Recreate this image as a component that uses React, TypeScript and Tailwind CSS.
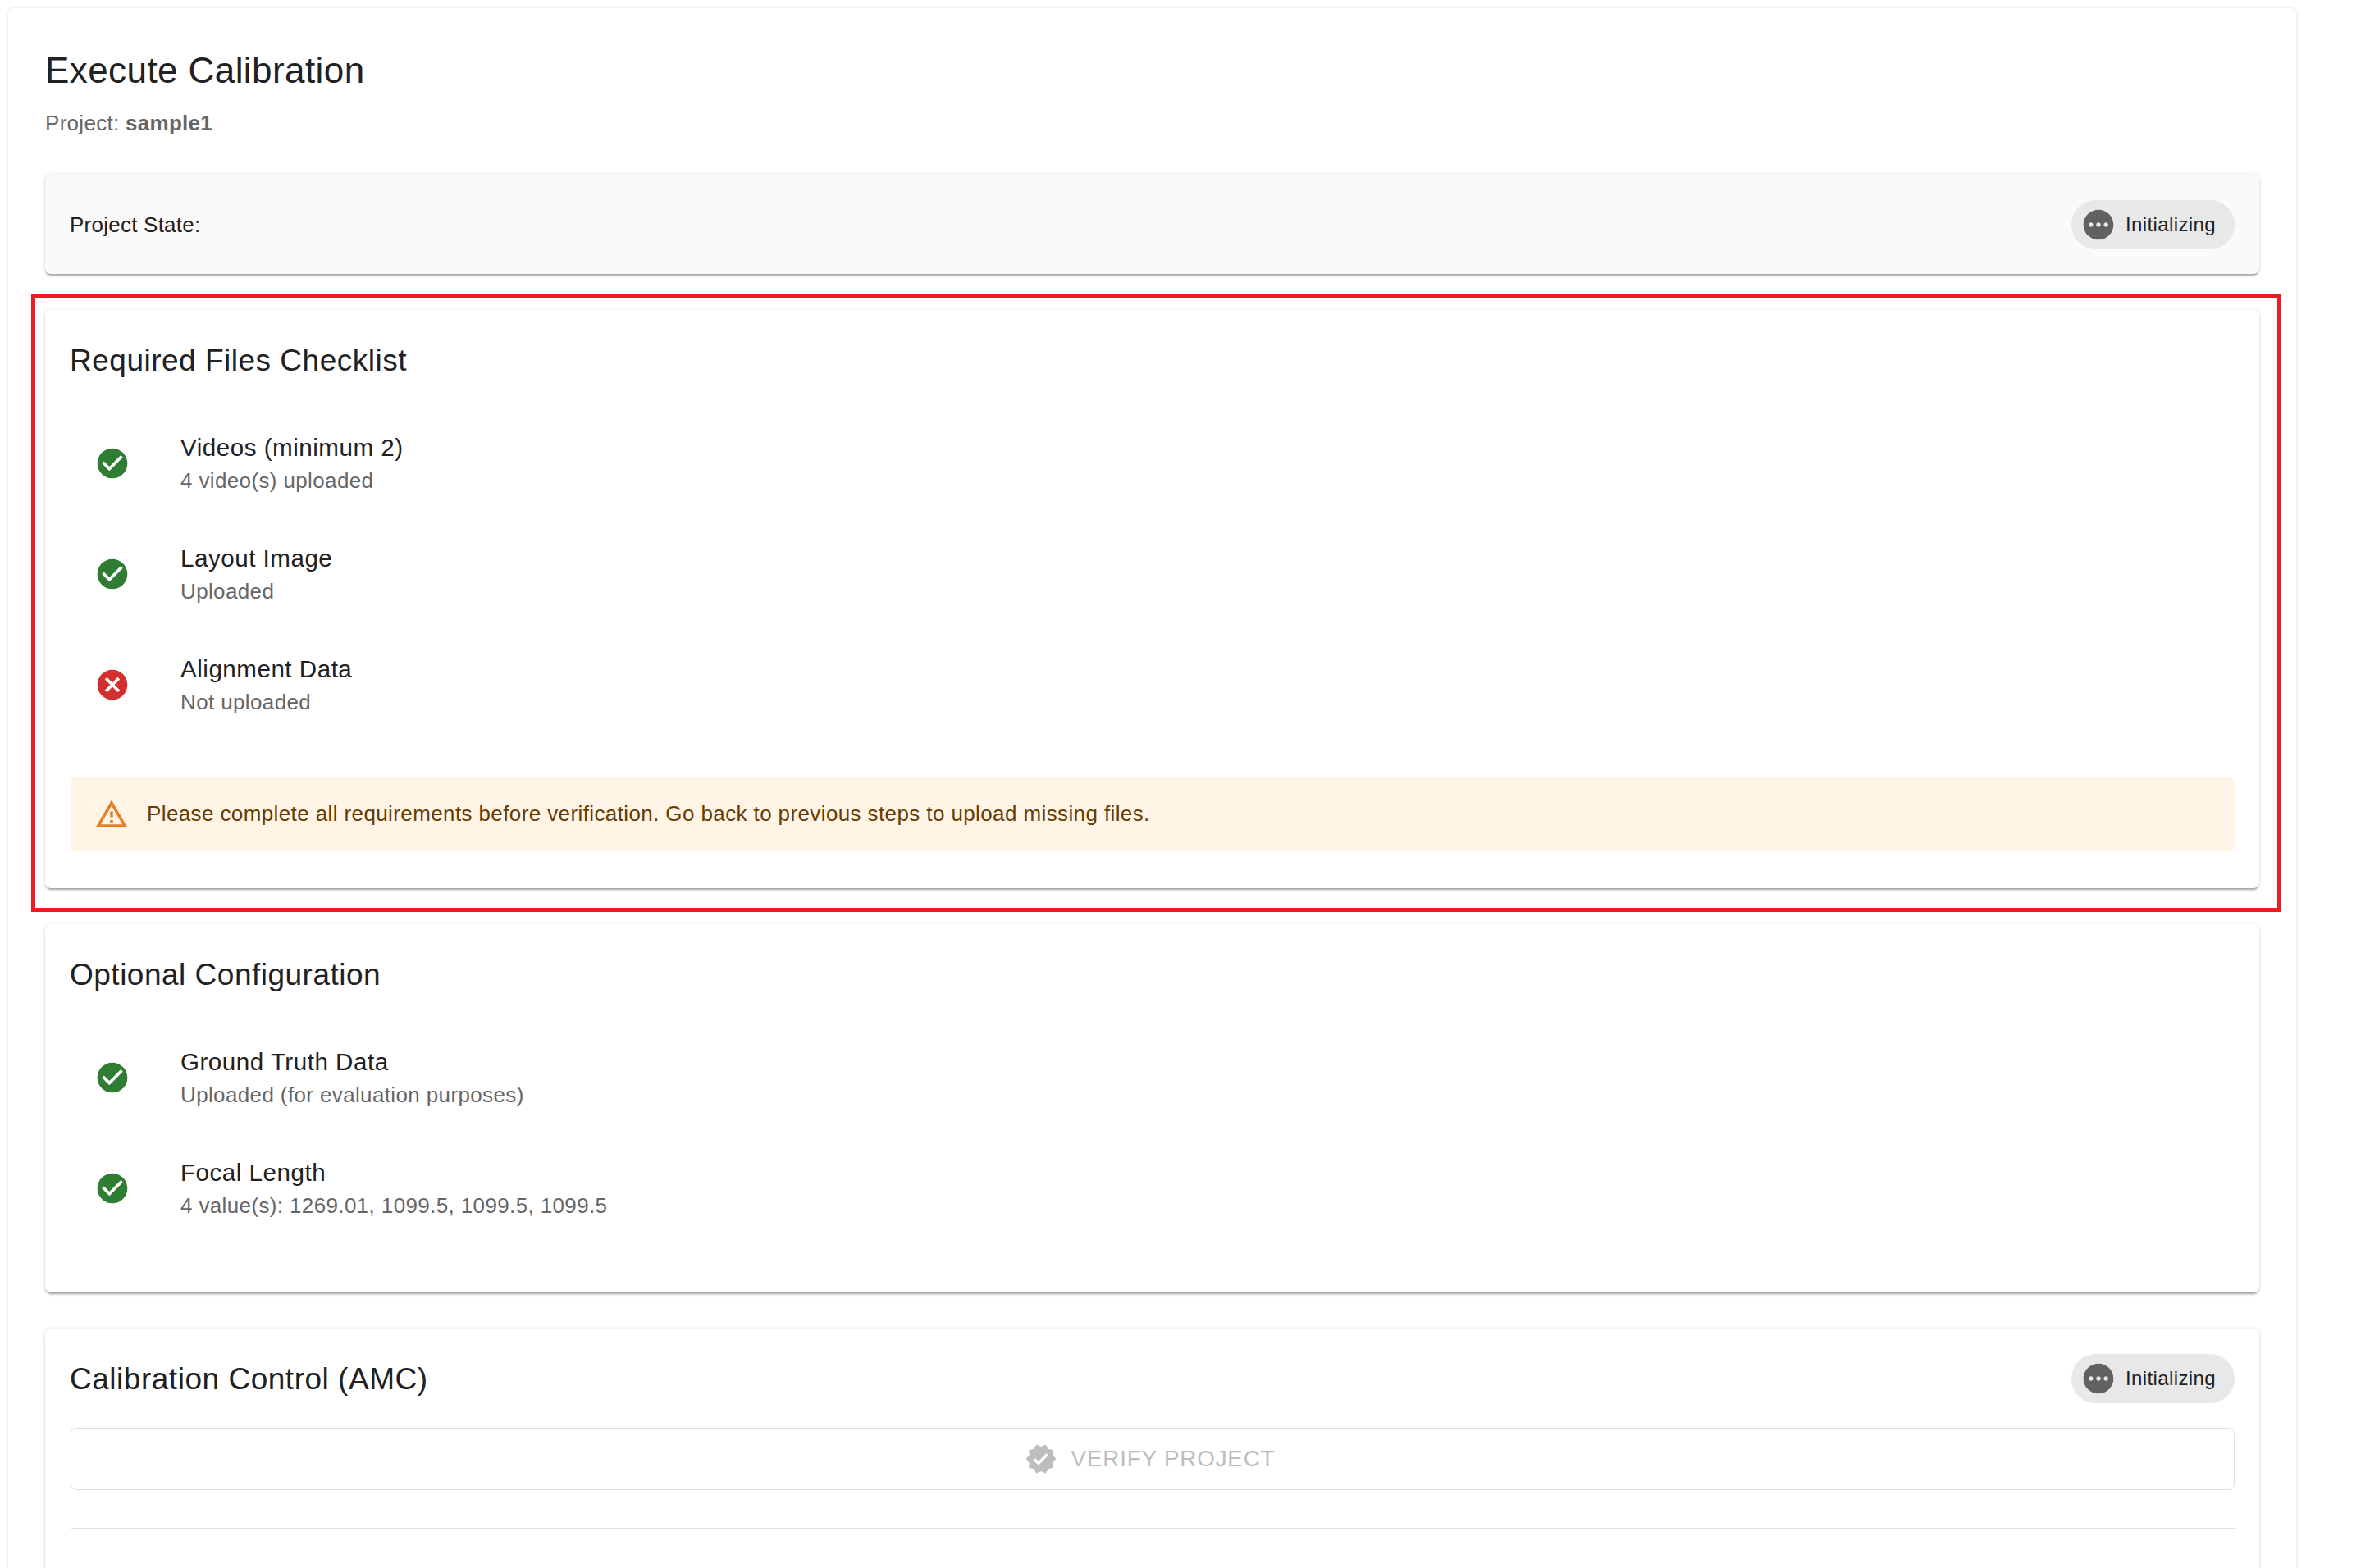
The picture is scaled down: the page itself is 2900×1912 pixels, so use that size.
const CHECK = 'M12 2C6.48 2 2 6.48 2 12s4.48 10 10 10 10-4.48 10-10S17.52 2 12 2zm-2 15l-5-5 1.41-1.41L10 14.17l7.59-7.59L19 8l-9 9z'
const CANCEL = 'M12 2C6.47 2 2 6.47 2 12s4.47 10 10 10 10-4.47 10-10S17.53 2 12 2zm5 13.59L15.59 17 12 13.41 8.41 17 7 15.59 10.59 12 7 8.41 8.41 7 12 10.59 15.59 7 17 8.41 13.41 12 17 15.59z'
const PENDING = 'M12 2C6.48 2 2 6.48 2 12s4.48 10 10 10 10-4.48 10-10S17.52 2 12 2zM7 13.5c-.83 0-1.5-.67-1.5-1.5s.67-1.5 1.5-1.5 1.5.67 1.5 1.5-.67 1.5-1.5 1.5zm5 0c-.83 0-1.5-.67-1.5-1.5s.67-1.5 1.5-1.5 1.5.67 1.5 1.5-.67 1.5-1.5 1.5zm5 0c-.83 0-1.5-.67-1.5-1.5s.67-1.5 1.5-1.5 1.5.67 1.5 1.5-.67 1.5-1.5 1.5z'
const WARNING = 'M12 5.99L19.53 19H4.47L12 5.99M12 2L1 21h22L12 2zm1 14h-2v2h2v-2zm0-6h-2v4h2v-4z'
const VERIFIED = 'M23 12l-2.44-2.79.34-3.69-3.61-.82-1.89-3.2L12 2.96 8.6 1.5 6.71 4.69 3.1 5.5l.34 3.7L1 12l2.44 2.79-.34 3.7 3.61.82L8.6 22.5l3.4-1.47 3.4 1.46 1.89-3.19 3.61-.82-.34-3.69L23 12zm-12.91 4.72l-3.8-3.81 1.48-1.48 2.32 2.33 5.85-5.87 1.48 1.48-7.33 7.35z'

function Icon({ d, className }: { d: string; className: string }) {
  return (
    <svg viewBox="0 0 24 24" fill="currentColor" className={className}>
      <path d={d} />
    </svg>
  )
}

function StateChip() {
  return (
    <div className="flex h-[60px] w-[199px] items-center rounded-full bg-[#e8e8e8] pl-[11px]">
      <Icon d={PENDING} className="h-[44px] w-[44px] text-[#616161]" />
      <span className="ml-[11px] text-[24px] tracking-[0.38px] text-[#212121]">Initializing</span>
    </div>
  )
}

function FileRow({ ok, name, detail }: { ok: boolean; name: string; detail: string }) {
  return (
    <div className="flex h-[135px] items-center pl-[29px]">
      <div className="-mt-[2px] w-[105px]">
        {ok ? (
          <Icon d={CHECK} className="h-[44px] w-[44px] text-[#2e7d32]" />
        ) : (
          <Icon d={CANCEL} className="h-[44px] w-[44px] text-[#d32f2f]" />
        )}
      </div>
      <div className="pt-px">
        <div className="text-[29.6px] leading-[40px] tracking-[0.5px] text-[#212121]">{name}</div>
        <div className="text-[26px] leading-[40px] tracking-[0.37px] text-[#666666]">{detail}</div>
      </div>
    </div>
  )
}

const cardShadow = 'shadow-[0_3px_3px_-1px_rgba(0,0,0,0.35),0_0_4px_rgba(0,0,0,0.12)]'

export default function App() {
  return (
    <div className="relative h-[1912px] w-[2900px] overflow-hidden bg-white font-['Liberation_Sans',sans-serif]">
      <div className="ml-[10px] mt-[10px] h-[2400px] w-[2789px] rounded-[7px] bg-white px-[45px] pt-[46px] shadow-[0_0_4px_rgba(0,0,0,0.14)]">
        <h1 className="text-[44px] leading-[60px] tracking-[0.42px] text-[#212121]">Execute Calibration</h1>
        <p className="mt-[14px] text-[26px] leading-[40px] tracking-[0.29px] text-[#666666]">
          Project: <strong className="font-bold">sample1</strong>
        </p>

        {/* Project state */}
        <div className={`mt-[43px] flex h-[121px] items-center justify-between rounded-[7px] bg-[#fafafa] pl-[30px] pr-[30px] ${cardShadow}`}>
          <span className="pt-px text-[26px] tracking-[0.24px] text-[#212121]">Project State:</span>
          <StateChip />
        </div>

        {/* Required files */}
        <section className={`mt-[44px] h-[705px] rounded-[7px] bg-white pl-[31px] pr-[30px] pt-[36px] ${cardShadow}`}>
          <h2 className="-ml-px pt-px text-[37px] leading-[50px] tracking-[0.5px] text-[#212121]">Required Files Checklist</h2>
          <div className="-mt-px pt-[34px]">
            <FileRow ok name="Videos (minimum 2)" detail="4 video(s) uploaded" />
            <FileRow ok name="Layout Image" detail="Uploaded" />
            <FileRow ok={false} name="Alignment Data" detail="Not uploaded" />
          </div>
          <div className="mt-[45px] flex h-[90px] items-center rounded-[7px] bg-[#fff4e5] pl-[29px]">
            <Icon d={WARNING} className="-mt-px h-[42px] w-[42px] text-[#e67e22]" />
            <span className="-mt-[2px] ml-[22px] text-[26px] tracking-[0.39px] text-[#663c00]">
              Please complete all requirements before verification. Go back to previous steps to upload missing files.
            </span>
          </div>
        </section>

        {/* Optional config */}
        <section className={`mt-[44px] h-[449px] rounded-[7px] bg-white pl-[31px] pr-[30px] pt-[36px] ${cardShadow}`}>
          <h2 className="-ml-px pt-px text-[37px] leading-[50px] tracking-[0.5px] text-[#212121]">Optional Configuration</h2>
          <div className="-mt-px pt-[34px]">
            <FileRow ok name="Ground Truth Data" detail="Uploaded (for evaluation purposes)" />
            <FileRow ok name="Focal Length" detail="4 value(s): 1269.01, 1099.5, 1099.5, 1099.5" />
          </div>
        </section>

        {/* Calibration control */}
        <section className={`mt-[44px] h-[500px] rounded-[7px] bg-white pl-[31px] pr-[30px] pt-[31px] ${cardShadow}`}>
          <div className="flex items-center justify-between">
            <h2 className="-ml-px pt-px text-[37px] leading-[50px] tracking-[0.52px] text-[#212121]">Calibration Control (AMC)</h2>
            <StateChip />
          </div>
          <button
            disabled
            className="mt-[30px] flex h-[76px] w-full items-center justify-center rounded-[7px] border border-[#e0e0e0] pr-[7px] text-[27.75px] tracking-[0.85px] text-[#bdbdbd]"
          >
            <Icon d={VERIFIED} className="h-[40px] w-[40px]" />
            <span className="ml-[17px]">VERIFY PROJECT</span>
          </button>
          <div className="mt-[46px] border-t border-[#e0e0e0]" />
        </section>
      </div>

      {/* Red annotation around the checklist */}
      <div className="absolute left-[38px] top-[358px] h-[754px] w-[2743px] border-[5px] border-[#ed1c24]" />
    </div>
  )
}
